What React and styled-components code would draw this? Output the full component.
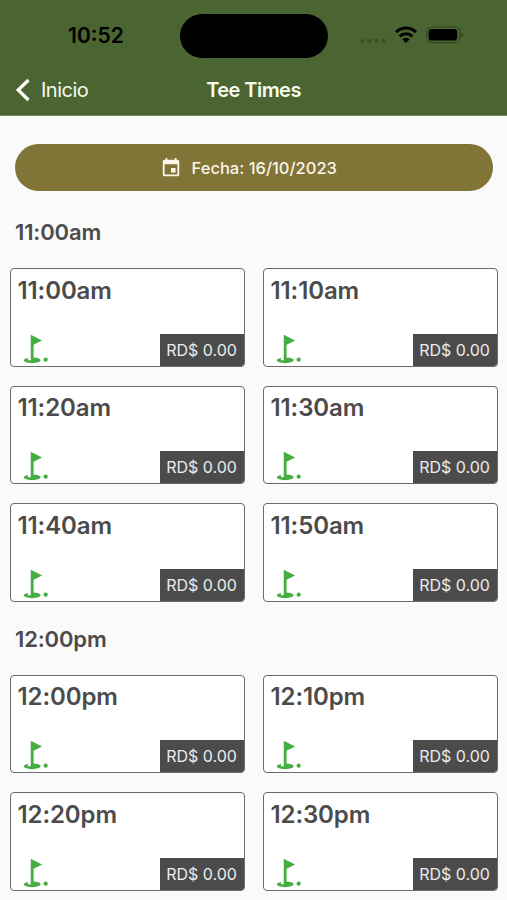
import React from 'react';
import styled, { createGlobalStyle } from 'styled-components';
import { MdEvent, MdGolfCourse } from 'react-icons/md';

const groups = [
  {
    title: '11:00am',
    times: ['11:00am', '11:10am', '11:20am', '11:30am', '11:40am', '11:50am'],
  },
  {
    title: '12:00pm',
    times: ['12:00pm', '12:10pm', '12:20pm', '12:30pm'],
  },
];

const StatusIcons = () => (
  <StyledStatusIcons width='104' height='20' viewBox='0 0 104 20'>
    <g fill='#3a5028'>
      <circle cx='2.5' cy='15.7' r='2' />
      <circle cx='9.5' cy='15.7' r='2' />
      <circle cx='16.5' cy='15.7' r='2' />
      <circle cx='23.5' cy='15.7' r='2' />
    </g>
    <g fill='none' stroke='#000' strokeWidth='3'>
      <path d='M36.1 7.2a14 14 0 0 1 19.8 0' />
      <path d='M39.7 11.4a8.9 8.9 0 0 1 12.6 0' />
    </g>
    <path d='M46 18l-3.7-3.8a5.3 5.3 0 0 1 7.4 0z' fill='#000' />
    <rect x='66.6' y='2' width='33.2' height='15.6' rx='5' fill='none' stroke='#304520' strokeWidth='1.1' />
    <rect x='68.6' y='4' width='28.6' height='11.6' rx='3.4' fill='#000' />
    <path d='M101.2 7.4q2 .8 2 2.5t-2 2.5z' fill='#304520' />
  </StyledStatusIcons>
);

const TeeTime = ({ time }) => (
  <Card>
    <CardTime>{time}</CardTime>
    <CardFooter>
      <MdGolfCourse size={34} color='#45ad42' />
      <Price>RD$ 0.00</Price>
    </CardFooter>
  </Card>
);

const App = () => (
  <Screen>
    <GlobalStyle />
    <Header>
      <StatusBar>
        <Clock>10:52</Clock>
        <Island />
        <StatusIcons />
      </StatusBar>
      <NavBar>
        <BackButton>
          <svg width='15' height='24' viewBox='0 0 15 24'>
            <path d='M13.5 2 3.2 12l10.3 10' fill='none' stroke='#fff' strokeWidth='3.3' />
          </svg>
          Inicio
        </BackButton>
        <Title>Tee Times</Title>
      </NavBar>
    </Header>
    <Content>
      <DateButton>
        <MdEvent size={22} />
        Fecha: 16/10/2023
      </DateButton>
      {groups.map(group => (
        <section key={group.title}>
          <GroupTitle>{group.title}</GroupTitle>
          <Grid>
            {group.times.map(time => <TeeTime key={time} time={time} />)}
          </Grid>
        </section>
      ))}
    </Content>
  </Screen>
);

const GlobalStyle = createGlobalStyle`
  * {
    box-sizing: border-box;
  }

  body {
    margin: 0;
    overflow: hidden;
  }
`;

const Screen = styled.div`
  height: 900px;
  overflow: hidden;
  background: #fafafa;
  color: #4b4b4b;
  font-family: Inter, 'Liberation Sans', sans-serif;
`;

const Header = styled.header`
  height: 116px;
  background: #4a6531;
  border-bottom: 1px solid #74876a;
`;

const StatusBar = styled.div`
  display: grid;
  grid-template-columns: 180px 148px 1fr;
  align-items: center;
  height: 57px;
  padding-top: 14px;
`;

const Clock = styled.div`
  padding-left: 68px;
  color: #000;
  font-size: 21px;
  font-weight: 600;
  line-height: 44px;
`;

const Island = styled.div`
  height: 43.5px;
  border-radius: 22px;
  background: #000;
`;

const StyledStatusIcons = styled.svg`
  margin: 0 0 2px 32px;
`;

const NavBar = styled.nav`
  display: grid;
  grid-template-columns: 1fr auto 1fr;
  align-items: center;
  height: 58px;
  padding: 8px 15px 0;
  color: #f6faf0;
`;

const BackButton = styled.div`
  display: flex;
  align-items: center;
  gap: 11px;
  font-size: 20px;
  letter-spacing: -0.5px;
`;

const Title = styled.h1`
  margin: 0;
  font-size: 20px;
  font-weight: 600;
  letter-spacing: -0.55px;
`;

const Content = styled.main`
  padding: 28px 9.5px 0 10px;
`;

const DateButton = styled.div`
  display: flex;
  align-items: center;
  justify-content: center;
  gap: 9.5px;
  height: 47px;
  margin: 0 5px;
  padding-right: 10.5px;
  border-radius: 24px;
  background: #807436;
  color: #fbf6ea;
  font-size: 16.5px;
  font-weight: 500;
`;

const GroupTitle = styled.h2`
  margin: 0;
  padding: 28px 5px 22.2px;
  font-size: 22px;
  font-weight: 600;
  line-height: 27px;
  letter-spacing: -0.15px;
`;

const Grid = styled.div`
  display: grid;
  grid-template-columns: 1fr 1fr;
  gap: 19px 18.5px;
  margin-bottom: -4.4px;
`;

const Card = styled.article`
  display: flex;
  flex-direction: column;
  justify-content: space-between;
  height: 98.6px;
  border: 1.4px solid #6a6a6a;
  border-radius: 4px;
  background: #fff;
  overflow: hidden;
`;

const CardTime = styled.div`
  padding: 6.4px 6.5px 0;
  font-size: 24px;
  font-weight: 600;
  line-height: 29px;
  letter-spacing: -0.1px;
`;

const CardFooter = styled.div`
  display: flex;
  align-items: flex-end;
  justify-content: space-between;
  padding-left: 6.5px;
`;

const Price = styled.div`
  width: 84px;
  height: 32px;
  background: #4b4b4b;
  color: #ececec;
  font-size: 16px;
  line-height: 32px;
  text-align: center;
`;

export default App;
